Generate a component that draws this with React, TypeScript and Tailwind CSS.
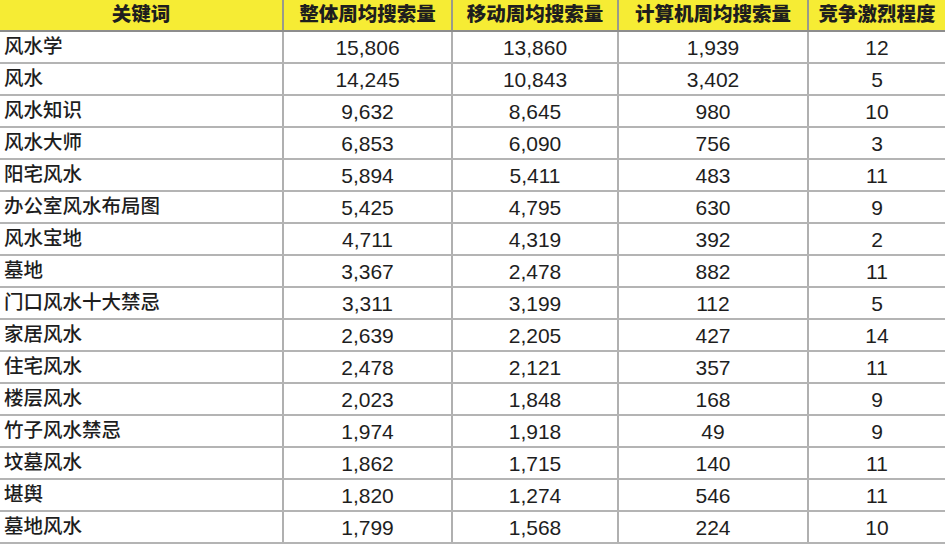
import React from 'react';

const HEAD = ['关键词', '整体周均搜索量', '移动周均搜索量', '计算机周均搜索量', '竞争激烈程度'];

const ROWS: [string, string, string, string, string][] = [
  ['风水学', '15,806', '13,860', '1,939', '12'],
  ['风水', '14,245', '10,843', '3,402', '5'],
  ['风水知识', '9,632', '8,645', '980', '10'],
  ['风水大师', '6,853', '6,090', '756', '3'],
  ['阳宅风水', '5,894', '5,411', '483', '11'],
  ['办公室风水布局图', '5,425', '4,795', '630', '9'],
  ['风水宝地', '4,711', '4,319', '392', '2'],
  ['墓地', '3,367', '2,478', '882', '11'],
  ['门口风水十大禁忌', '3,311', '3,199', '112', '5'],
  ['家居风水', '2,639', '2,205', '427', '14'],
  ['住宅风水', '2,478', '2,121', '357', '11'],
  ['楼层风水', '2,023', '1,848', '168', '9'],
  ['竹子风水禁忌', '1,974', '1,918', '49', '9'],
  ['坟墓风水', '1,862', '1,715', '140', '11'],
  ['堪舆', '1,820', '1,274', '546', '11'],
  ['墓地风水', '1,799', '1,568', '224', '10'],
];

const WIDTHS = ['w-[283px]', 'w-[169px]', 'w-[166px]', 'w-[190px]', 'w-[137px]'];

export default function App() {
  return (
    <div className="w-[945px] h-[544px] overflow-hidden bg-white text-[#1e1e1e] font-['Liberation_Sans','Noto_Sans_CJK_SC',sans-serif]">
      <table className="border-collapse table-fixed w-[945px]">
        <colgroup>
          {WIDTHS.map((w, i) => <col key={i} className={w} />)}
        </colgroup>
        <thead>
          <tr className="h-[31px] bg-[#f6ec34]">
            {HEAD.map((h, i) => (
              <th
                key={h}
                className={`p-0 text-center text-[19.5px] font-black leading-none border-b-2 border-b-[#8d8d8d] ${i < 4 ? 'border-r-2 border-r-[#9a9a8a]' : ''}`}
              >
                {h}
              </th>
            ))}
          </tr>
        </thead>
        <tbody>
          {ROWS.map((r) => (
            <tr key={r[0]} className="h-[32px]">
              {r.map((c, i) => (
                <td
                  key={i}
                  className={`p-0 leading-none border-b-2 border-b-[#b4b4b4] ${i === 0 ? 'text-left pl-[4px] text-[19.5px] font-medium' : 'text-center text-[21px]'} ${i < 4 ? 'border-r-2 border-r-[#b0b0b0]' : ''}`}
                >
                  {c}
                </td>
              ))}
            </tr>
          ))}
        </tbody>
      </table>
    </div>
  );
}
